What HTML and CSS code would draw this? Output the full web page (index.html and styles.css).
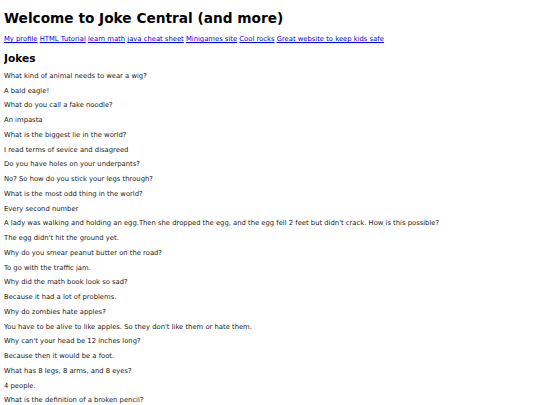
FILE: index.html
```html
<!DOCTYPE html>
<html>
<head>
<meta charset="utf-8">
<title>Joke Central</title>
<link rel="stylesheet" href="styles.css">
</head>
<body class="page">
<h1 class="title">Welcome to Joke Central (and more)</h1>
<nav class="links">
<a href="#">My profile</a>
<a href="#">HTML Tutorial</a>
<a href="#">learn math</a>
<a href="#">java cheat sheet</a>
<a href="#">Minigames site</a>
<a href="#">Cool rocks</a>
<a href="#">Great website to keep kids safe</a>
</nav>
<h2 class="section">Jokes</h2>
<p class="line">What kind of animal needs to wear a wig?</p>
<p class="line">A bald eagle!</p>
<p class="line">What do you call a fake noodle?</p>
<p class="line">An impasta</p>
<p class="line">What is the biggest lie in the world?</p>
<p class="line">I read terms of sevice and disagreed</p>
<p class="line">Do you have holes on your underpants?</p>
<p class="line">No? So how do you stick your legs through?</p>
<p class="line">What is the most odd thing in the world?</p>
<p class="line">Every second number</p>
<p class="line">A lady was walking and holding an egg.Then she dropped the egg, and the egg fell 2 feet but didn't crack. How is this possible?</p>
<p class="line">The egg didn't hit the ground yet.</p>
<p class="line">Why do you smear peanut butter on the road?</p>
<p class="line">To go with the traffic jam.</p>
<p class="line">Why did the math book look so sad?</p>
<p class="line">Because it had a lot of problems.</p>
<p class="line">Why do zombies hate apples?</p>
<p class="line">You have to be alive to like apples. So they don't like them or hate them.</p>
<p class="line">Why can't your head be 12 inches long?</p>
<p class="line">Because then it would be a foot.</p>
<p class="line">What has 8 legs, 8 arms, and 8 eyes?</p>
<p class="line">4 people.</p>
<p class="line last">What is the definition of a broken pencil?</p>
</body>
</html>
```
FILE: styles.css
```css
html, body {
  background: #ffffff;
}
.page {
  margin: 4px 4px 0 4px;
  font-family: "DejaVu Sans", Verdana, sans-serif;
  color: #000;
}
.title {
  font-size: 13.7px;
  font-weight: bold;
  margin: 4px 0 7px 0;
  line-height: 20px;
}
.links {
  font-size: 6.8px;
  line-height: 9px;
  margin: 0;
}
.links a {
  color: #0000ee;
}
.section {
  font-size: 10.6px;
  font-weight: bold;
  margin: 7px 0 6px 0;
  line-height: 14px;
}
.line {
  font-size: 6.8px;
  line-height: 8px;
  margin: 6.75px 0;
  color: #222;
}
.last {
  margin-bottom: 0;
}
```
